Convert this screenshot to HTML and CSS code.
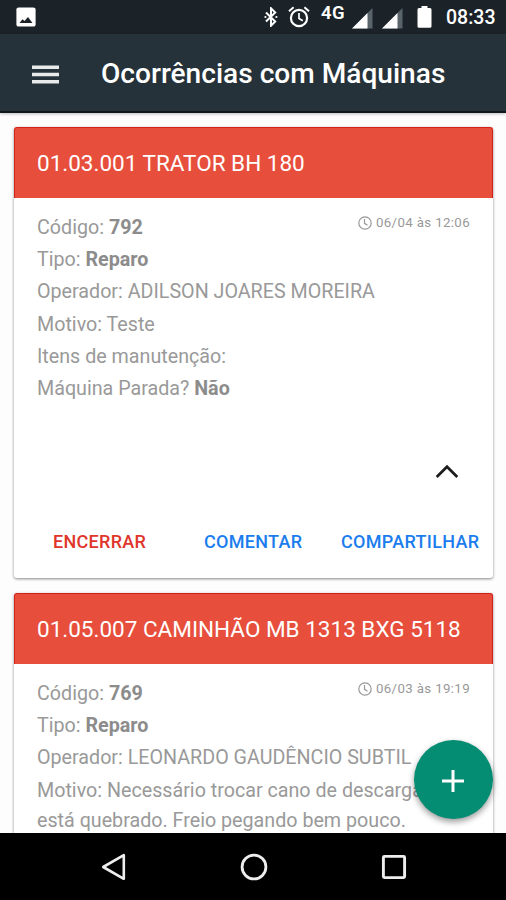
FILE: index.html
```html
<!DOCTYPE html>
<html lang="pt-BR">
<head>
<meta charset="utf-8">
<title>Ocorrências com Máquinas</title>
<link rel="stylesheet" href="styles.css">
</head>
<body>
<div class="status">
  <svg class="st-photo" width="20" height="20" viewBox="0 0 20 20"><rect x=".4" y=".4" width="19.2" height="19.2" rx="2.2" fill="#fff"/><path d="M3.500 16l3-3.800 2 1.800 3.500-4L16.500 16z" fill="#1b2329"/></svg>
  <svg class="st-bt" width="14" height="20" viewBox="0 0 14 20"><path d="M2 5.500l9.200 9L7 18.700V1.300l4.200 4.200-9.200 9" fill="none" stroke="#fff" stroke-width="2"/><circle cx="1.400" cy="10" r="1.100" fill="#fff"/><circle cx="12.400" cy="10" r="1.100" fill="#fff"/></svg>
  <svg class="st-alarm" width="22" height="22" viewBox="0 0 22 22" fill="none" stroke="#fff"><circle cx="11" cy="12" r="8.100" stroke-width="2.200"/><path d="M11 7v5.500l3.800 2.300" stroke-width="1.700"/><path d="M1 5.200l4.600-3.900M21 5.200l-4.600-3.900" stroke-width="2"/></svg>
  <span class="st-net">4G</span>
  <svg class="st-sig" width="21" height="21" viewBox="0 0 21 21"><path d="M0 20.500L20.500 0v20.500z" fill="#59636a"/><path d="M0 20.500L15.500 5v15.500z" fill="#fff"/></svg>
  <svg class="st-sig2" width="21" height="21" viewBox="0 0 21 21"><path d="M0 20.500L20.500 0v20.500z" fill="#59636a"/><path d="M0 20.500L15.500 5v15.500z" fill="#fff"/></svg>
  <svg class="st-bat" width="15" height="22" viewBox="0 0 15 22"><path d="M4.500 0h6v2H13q1.500 0 1.500 1.500v16.800Q14.500 21.800 13 21.800H2Q.5 21.800 .5 20.300V3.500Q.5 2 2 2h2.500z" fill="#fff"/></svg>
  <span class="st-time">08:33</span>
</div>
<header class="bar">
  <svg class="menu" width="27" height="19" viewBox="0 0 27 19"><path d="M0 2.200h27M0 9.500h27M0 16.800h27" stroke="#fff" stroke-opacity=".9" stroke-width="3.600"/></svg>
  <h1>Ocorrências com Máquinas</h1>
</header>
<main class="list">
  <article class="card first">
    <h2>01.03.001 TRATOR BH 180</h2>
    <div class="body">
      <div class="date"><svg width="14" height="14" viewBox="0 0 14 14" fill="none" stroke="#999" stroke-width="1.200"><circle cx="7" cy="7" r="6.200"/><path d="M6.500 3v4.300l3 1.900"/></svg><time>06/04 às 12:06</time></div>
      <p>Código: <b>792</b></p>
      <p>Tipo: <b>Reparo</b></p>
      <p>Operador: ADILSON JOARES MOREIRA</p>
      <p>Motivo: Teste</p>
      <p>Itens de manutenção:</p>
      <p>Máquina Parada? <b>Não</b></p>
    </div>
    <div class="collapse"><svg width="24" height="15" viewBox="0 0 24 15"><path d="M1.700 13L12 2.700 22.300 13" fill="none" stroke="#1c1c1c" stroke-width="2.700"/></svg></div>
    <div class="actions"><span class="close">ENCERRAR</span><span class="comment">COMENTAR</span><span class="share">COMPARTILHAR</span></div>
  </article>
  <article class="card">
    <h2>01.05.007 CAMINHÃO MB 1313 BXG 5118</h2>
    <div class="body">
      <div class="date"><svg width="14" height="14" viewBox="0 0 14 14" fill="none" stroke="#999" stroke-width="1.200"><circle cx="7" cy="7" r="6.200"/><path d="M6.500 3v4.300l3 1.900"/></svg><time>06/03 às 19:19</time></div>
      <p>Código: <b>769</b></p>
      <p>Tipo: <b>Reparo</b></p>
      <p>Operador: LEONARDO GAUDÊNCIO SUBTIL</p>
      <p>Motivo: Necessário trocar cano de descarga<br>está quebrado. Freio pegando bem pouco.</p>
    </div>
  </article>
  <div class="fab"><svg width="22" height="22" viewBox="0 0 22 22"><path d="M11 0v22M0 11h22" stroke="#fff" stroke-width="3"/></svg></div>
</main>
<nav class="nav">
  <svg width="25" height="28" viewBox="0 0 25 28"><path d="M2.200 14L22.800 2.200v23.600z" fill="none" stroke="#eee" stroke-width="2.600" stroke-linejoin="round"/></svg>
  <svg width="28" height="28" viewBox="0 0 28 28"><circle cx="14" cy="14" r="11.900" fill="none" stroke="#eee" stroke-width="2.800"/></svg>
  <svg width="26" height="26" viewBox="0 0 26 26"><rect x="2.400" y="2.400" width="21.200" height="21.200" rx="1" fill="none" stroke="#eee" stroke-width="2.900"/></svg>
</nav>
</body>
</html>
```
FILE: styles.css
```css
* { box-sizing: border-box; }
body { margin: 0; width: 506px; height: 900px; overflow: hidden; display: flex; flex-direction: column; background: #fdfdfd; font-family: Roboto, sans-serif; white-space: nowrap; }
svg { display: block; flex: none; }
.status { height: 34px; flex: none; display: flex; align-items: flex-start; background: #1b2329; color: #fff; }
.st-photo { margin: 7px 0 0 16px; }
.st-bt { margin: 7px 0 0 228px; }
.st-alarm { margin: 6px 0 0 10px; }
.st-net { margin: 3px 0 0 11px; width: 31px; font-size: 18.500px; line-height: 20px; font-weight: 600; letter-spacing: .5px; }
.st-sig { margin-top: 8px; }
.st-sig2 { margin: 8px 0 0 9px; }
.st-bat { margin: 6px 0 0 14px; }
.st-time { margin: 7px 0 0 14px; font-size: 19.500px; line-height: 22px; font-weight: 500; }
.bar { height: 79px; flex: none; display: flex; align-items: center; padding-left: 32px; background: #263239; border-bottom: 2px solid #11181c; color: #fff; box-shadow: 0 1px 3px #0004; }
.menu { margin-top: 3px; }
h1 { margin: 3px 0 0 42px; font-size: 28.100px; line-height: 36px; font-weight: 500; }
.list { position: relative; height: 720px; flex: none; padding: 14px 13px 0 14px; overflow: hidden; }
.card { background: #fff; border-radius: 3px; box-shadow: 0 1px 3px #0007; margin-bottom: 15px; }
.first { height: 451px; display: flex; flex-direction: column; }
h2 { margin: 0; height: 71px; flex: none; padding-left: 22px; line-height: 70px; font-size: 22.500px; font-weight: 400; color: #fff; background: #e74e3c; border: solid #d32218; border-width: 1px 1px 0; border-radius: 3px 3px 0 0; }
.body { position: relative; padding: 14.600px 23px 0; color: #999; font-size: 19.700px; line-height: 30px; }
p { margin: 0 0 2.350px; }
b { font-weight: 700; color: #8c8c8c; }
.date { position: absolute; top: 17px; right: 23px; display: flex; align-items: center; gap: 4px; font-size: 13.300px; letter-spacing: .35px; line-height: 16px; }
.collapse { margin: 57px 0 0 421px; }
.actions { display: flex; margin-top: 51px; padding-left: 39px; font-size: 18px; letter-spacing: .3px; line-height: 24px; font-weight: 500; color: #1b7ded; }
.close { width: 151px; color: #e0352b; }
.comment { width: 137px; }
.fab { position: absolute; left: 414px; top: 627px; width: 79px; height: 79px; border-radius: 50%; display: flex; align-items: center; justify-content: center; background: #058d74; box-shadow: 0 3px 6px #0006; padding: 3px 1px 0 0; }
.nav { height: 67px; flex: none; display: flex; align-items: center; justify-content: space-between; padding: 0 99px 0 101px; background: #000; }
```
